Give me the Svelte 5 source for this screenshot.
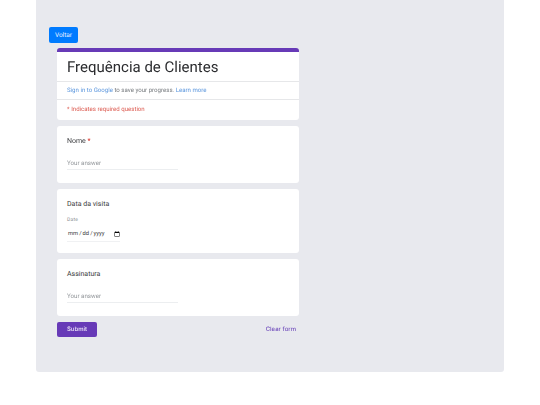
<script>
  let nome = "";
  let visita = "";
  let assinatura = "";

  function clearForm() {
    nome = "";
    visita = "";
    assinatura = "";
  }
</script>

<div class="page">
  <main class="panel">
    <button class="back" type="button">Voltar</button>

    <form class="form" on:submit|preventDefault>
      <section class="card header">
        <h1>Frequência de Clientes</h1>
        <p class="row">
          <a href="#signin">Sign in to Google</a> to save your progress. <a href="#more">Learn more</a>
        </p>
        <p class="row required">* Indicates required question</p>
      </section>

      <section class="card question">
        <label for="nome">Nome <span class="star">*</span></label>
        <input id="nome" class="text" type="text" placeholder="Your answer" bind:value={nome} />
      </section>

      <section class="card question date-card">
        <label for="visita">Data da visita</label>
        <span class="hint">Date</span>
        <input id="visita" class="date" type="date" bind:value={visita} />
      </section>

      <section class="card question">
        <label for="assinatura">Assinatura</label>
        <input id="assinatura" class="text" type="text" placeholder="Your answer" bind:value={assinatura} />
      </section>

      <div class="actions">
        <button class="submit" type="submit">Submit</button>
        <button class="clear" type="button" on:click={clearForm}>Clear form</button>
      </div>
    </form>
  </main>
</div>

<style>
  :global(body) {
    background: #fff;
    font-family: Roboto, "Liberation Sans", sans-serif;
    text-rendering: geometricPrecision;
  }

  .page {
    padding: 0 36px;
    height: 405px;
    box-sizing: border-box;
  }

  .panel {
    height: 372px;
    box-sizing: border-box;
    padding: 27px 13px 0;
    background: #e8e9ee;
    border-radius: 0 0 3px 3px;
  }

  .back {
    display: block;
    width: 29px;
    height: 16px;
    padding: 0;
    border: none;
    border-radius: 2px;
    background: #007bff;
    color: #e6f2ff;
    font: 400 6.5px Roboto, sans-serif;
    text-rendering: inherit;
  }

  .form {
    width: 242px;
    margin: 5px 0 0 8px;
    display: flex;
    flex-direction: column;
    gap: 6px;
    opacity: 0.999;
  }

  .card {
    background: #fff;
    border-radius: 3px;
    box-sizing: border-box;
  }

  .header {
    height: 71.5px;
    border-top: 4px solid #673ab7;
  }

  h1 {
    margin: 0;
    height: 29px;
    padding: 0 10px;
    font-size: 15px;
    font-weight: 400;
    line-height: 31px;
    color: #2b2c2f;
  }

  .row {
    margin: 0;
    height: 18px;
    padding: 0 10px;
    border-top: 1px solid #e6e7e9;
    box-sizing: border-box;
    font-size: 6.1px;
    line-height: 17px;
    color: #75797d;
  }

  .row a {
    color: #5b96dd;
    text-decoration: none;
  }

  .required {
    height: 20.5px;
    line-height: 20px;
    color: #dc5a50;
  }

  .question {
    height: 57.5px;
    padding: 11px 10px 0;
    display: flex;
    flex-direction: column;
    align-items: flex-start;
  }

  .date-card {
    height: 63.5px;
  }

  label {
    font-size: 7px;
    line-height: 9px;
    color: #3c3d40;
  }

  .star {
    color: #d93025;
  }

  .text {
    width: 111px;
    height: 11.5px;
    margin-top: 11.5px;
    padding: 0;
    border: none;
    border-bottom: 1px solid #eceef0;
    outline: none;
    box-sizing: content-box;
    font: 400 6.2px Roboto, sans-serif;
    color: #202124;
    text-rendering: inherit;
  }

  .text::placeholder {
    color: #93979b;
    opacity: 1;
  }

  .hint {
    margin-top: 7.5px;
    font-size: 5px;
    line-height: 7px;
    letter-spacing: 0.2px;
    color: #8a8e92;
  }

  .date {
    width: 53px;
    height: 13px;
    margin-top: 4px;
    padding: 0;
    border: none;
    border-bottom: 1px solid #f0f1f3;
    outline: none;
    box-sizing: content-box;
    font: 400 5.8px Roboto, sans-serif;
    color: #3c3d40;
    text-rendering: inherit;
  }

  .date::-webkit-calendar-picker-indicator {
    width: 6px;
    height: 6px;
    margin: 0;
    padding: 0;
  }

  .actions {
    display: flex;
    justify-content: space-between;
    align-items: center;
    margin-top: -0.5px;
    padding-right: 3px;
  }

  .submit {
    width: 40px;
    height: 15.5px;
    padding: 0;
    border: none;
    border-radius: 2px;
    background: #673ab7;
    color: #eee8f8;
    font: 500 6px Inter, Roboto, sans-serif;
    text-rendering: inherit;
  }

  .clear {
    padding: 0;
    border: none;
    background: none;
    color: #7350bd;
    font: 500 6px Inter, Roboto, sans-serif;
    text-rendering: inherit;
  }
</style>
